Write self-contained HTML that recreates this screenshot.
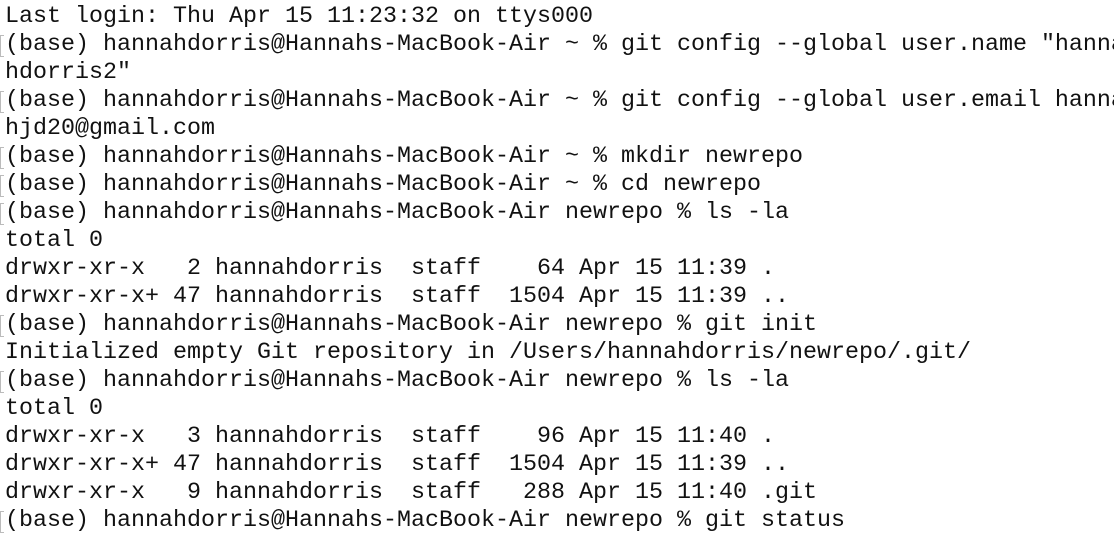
<!DOCTYPE html>
<html><head><meta charset="utf-8"><style>
html,body{margin:0;padding:0;background:#fff;width:1114px;height:534px;overflow:hidden}
pre{margin:0;position:absolute;left:5px;top:3px;font-family:"Liberation Mono",monospace;font-size:23.33px;line-height:28px;color:#111;white-space:pre}
.m{position:absolute;left:0;width:3px;height:20px;border:1px solid #bbb;border-right:none}
</style></head><body>
<div class="m" style="top:35px"></div>
<div class="m" style="top:91px"></div>
<div class="m" style="top:147px"></div>
<div class="m" style="top:175px"></div>
<div class="m" style="top:203px"></div>
<div class="m" style="top:315px"></div>
<div class="m" style="top:371px"></div>
<div class="m" style="top:511px"></div>
<pre>Last login: Thu Apr 15 11:23:32 on ttys000
(base) hannahdorris@Hannahs-MacBook-Air ~ % git config --global user.name "hanna
hdorris2"
(base) hannahdorris@Hannahs-MacBook-Air ~ % git config --global user.email hanna
hjd20@gmail.com
(base) hannahdorris@Hannahs-MacBook-Air ~ % mkdir newrepo
(base) hannahdorris@Hannahs-MacBook-Air ~ % cd newrepo
(base) hannahdorris@Hannahs-MacBook-Air newrepo % ls -la
total 0
drwxr-xr-x   2 hannahdorris  staff    64 Apr 15 11:39 .
drwxr-xr-x+ 47 hannahdorris  staff  1504 Apr 15 11:39 ..
(base) hannahdorris@Hannahs-MacBook-Air newrepo % git init
Initialized empty Git repository in /Users/hannahdorris/newrepo/.git/
(base) hannahdorris@Hannahs-MacBook-Air newrepo % ls -la
total 0
drwxr-xr-x   3 hannahdorris  staff    96 Apr 15 11:40 .
drwxr-xr-x+ 47 hannahdorris  staff  1504 Apr 15 11:39 ..
drwxr-xr-x   9 hannahdorris  staff   288 Apr 15 11:40 .git
(base) hannahdorris@Hannahs-MacBook-Air newrepo % git status</pre>
</body></html>
